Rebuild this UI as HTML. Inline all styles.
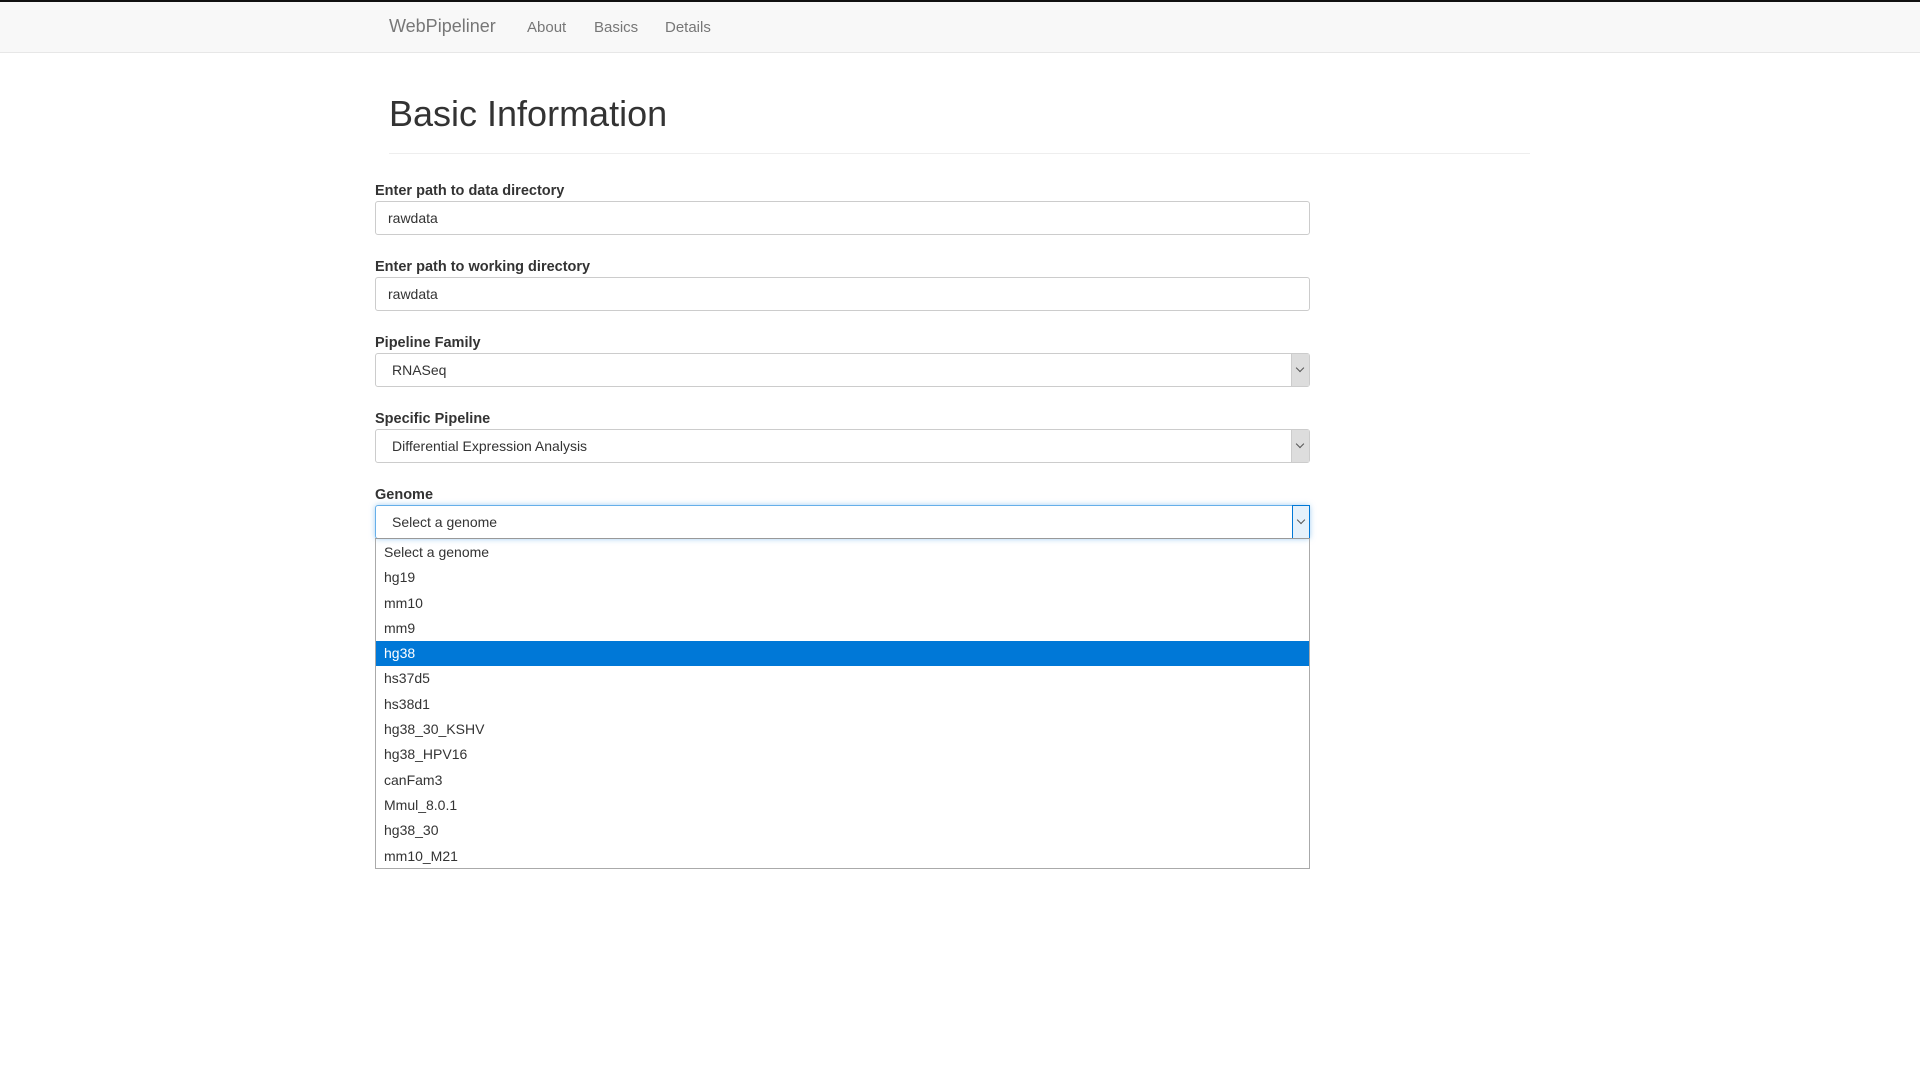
<!DOCTYPE html>
<html><head><meta charset="utf-8"><style>
*{box-sizing:border-box;margin:0;padding:0}
body{width:1920px;height:1080px;background:#fff;font-family:"Liberation Sans",Arial,sans-serif;color:#333;position:relative;overflow:hidden}
.nav{position:absolute;left:0;top:0;width:1920px;height:53px;background:#f8f8f8;border-top:2px solid #111;border-bottom:1px solid #e7e7e7}
.nav span{position:absolute;color:#777;font-size:15px;top:17px}
.brand{font-size:18px!important;top:14px!important;left:389px}
h1{position:absolute;left:389px;top:93px;font-size:36px;font-weight:400;color:#333}
.hr{position:absolute;left:389px;top:153px;width:1141px;height:1px;background:#eee}
label{position:absolute;left:375px;font-size:14.5px;font-weight:bold;color:#333}
.in{position:absolute;left:375px;width:935px;height:34px;border:1px solid #ccc;border-radius:3px;font-size:14px;color:#333;padding:8px 12px}
.sel{padding-left:16px}
.arr{position:absolute;right:0;top:0;width:18px;height:32px;background:#ddd;border-left:1px solid #ccc}
.arr:after{content:"";position:absolute;left:5px;top:11px;width:5px;height:5px;border-right:1px solid #555;border-bottom:1px solid #555;transform:rotate(45deg)}
.focus{border-color:#66afe9;box-shadow:0 0 6px rgba(102,175,233,.6)}
.focus .arr{background:#e5f1fb;border:1px solid #0078d7;top:-1px;right:-1px;height:34px}
.list{position:absolute;left:375px;top:538px;width:935px;height:331px;border:1px solid #aaa;border-top:1px solid #999;padding-top:1px}
.list div{height:25.3px;line-height:25px;font-size:14px;padding-left:8px;color:#333}
.list .hi{background:#0078d7;color:#fff}
</style></head><body>
<div class="nav"><span class="brand">WebPipeliner</span><span style="left:527px">About</span><span style="left:594px">Basics</span><span style="left:665px">Details</span></div>
<h1>Basic Information</h1>
<div class="hr"></div>
<label style="top:183px">Enter path to data directory</label>
<div class="in" style="top:201px">rawdata</div>
<label style="top:259px">Enter path to working directory</label>
<div class="in" style="top:277px">rawdata</div>
<label style="top:335px">Pipeline Family</label>
<div class="in sel" style="top:353px">RNASeq<div class="arr"></div></div>
<label style="top:411px">Specific Pipeline</label>
<div class="in sel" style="top:429px">Differential Expression Analysis<div class="arr"></div></div>
<label style="top:487px">Genome</label>
<div class="in sel focus" style="top:505px">Select a genome<div class="arr"></div></div>
<div class="list">
<div>Select a genome</div><div>hg19</div><div>mm10</div><div>mm9</div><div class="hi">hg38</div><div>hs37d5</div><div>hs38d1</div><div>hg38_30_KSHV</div><div>hg38_HPV16</div><div>canFam3</div><div>Mmul_8.0.1</div><div>hg38_30</div><div>mm10_M21</div>
</div>
</body></html>
